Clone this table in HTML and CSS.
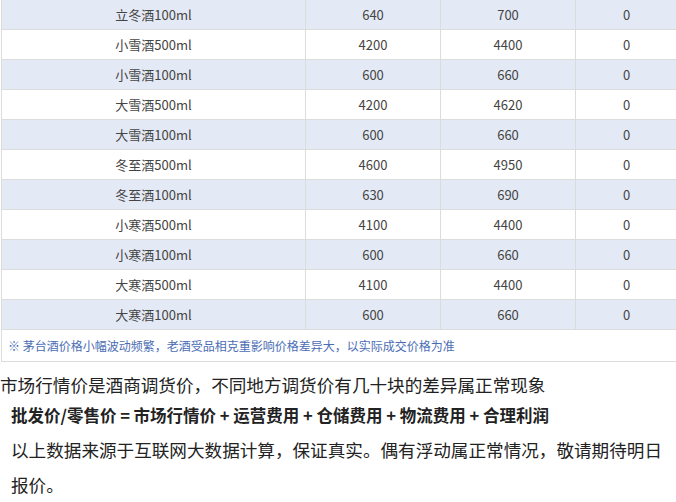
FILE: index.html
```html
<!DOCTYPE html>
<html lang="zh-CN">
<head>
<meta charset="utf-8">
<link rel="stylesheet" href="styles.css">
</head>
<body>
<div class="page">
  <table class="prices">
    <colgroup>
      <col class="c1"><col class="c2"><col class="c3"><col class="c4">
    </colgroup>
    <tbody>
      <tr class="alt"><td>立冬酒100ml</td><td>640</td><td>700</td><td>0</td></tr>
      <tr><td>小雪酒500ml</td><td>4200</td><td>4400</td><td>0</td></tr>
      <tr class="alt"><td>小雪酒100ml</td><td>600</td><td>660</td><td>0</td></tr>
      <tr><td>大雪酒500ml</td><td>4200</td><td>4620</td><td>0</td></tr>
      <tr class="alt"><td>大雪酒100ml</td><td>600</td><td>660</td><td>0</td></tr>
      <tr><td>冬至酒500ml</td><td>4600</td><td>4950</td><td>0</td></tr>
      <tr class="alt"><td>冬至酒100ml</td><td>630</td><td>690</td><td>0</td></tr>
      <tr><td>小寒酒500ml</td><td>4100</td><td>4400</td><td>0</td></tr>
      <tr class="alt"><td>小寒酒100ml</td><td>600</td><td>660</td><td>0</td></tr>
      <tr><td>大寒酒500ml</td><td>4100</td><td>4400</td><td>0</td></tr>
      <tr class="alt"><td>大寒酒100ml</td><td>600</td><td>660</td><td>0</td></tr>
      <tr class="note"><td colspan="4">※ 茅台酒价格小幅波动频繁，老酒受品相克重影响价格差异大，以实际成交价格为准</td></tr>
    </tbody>
  </table>
  <p class="lead">市场行情价是酒商调货价，不同地方调货价有几十块的差异属正常现象</p>
  <p class="formula">批发价/零售价 = 市场行情价 + 运营费用 + 仓储费用 + 物流费用 + 合理利润</p>
  <p class="source">以上数据来源于互联网大数据计算，保证真实。偶有浮动属正常情况，敬请期待明日报价。</p>
</div>
</body>
</html>
```
FILE: styles.css
```css
html, body {
  margin: 0;
  padding: 0;
  background: #fff;
}
body {
  font-family: "Noto Sans CJK SC", "Liberation Sans", sans-serif;
  overflow: hidden;
  width: 676px;
  height: 502px;
}
.page {
  width: 676px;
  overflow: hidden;
}
.prices {
  border-collapse: collapse;
  table-layout: fixed;
  width: 676px;
  margin-left: 1px;
  font-size: 13px;
  color: #444;
}
.c1 { width: 304px; }
.c2 { width: 135px; }
.c3 { width: 135px; }
.c4 { width: 102px; }
.prices td {
  height: 29px;
  padding: 0;
  text-align: center;
  vertical-align: middle;
  border: 1px solid #dcdcdc;
  line-height: 16px;
}
.prices tr:first-child td {
  border-top: none;
}
.prices tr.alt td {
  background: #e4eaf5;
}
.prices tr.note td {
  height: 31px;
  text-align: left;
  padding-left: 6px;
  font-size: 12px;
  color: #4a6db5;
  background: #fff;
}
.lead {
  margin: 10px 0 0;
  font-size: 17.6px;
  line-height: 26px;
  color: #222;
}
.formula {
  margin: 4px 0 0 11px;
  font-size: 16.5px;
  line-height: 26px;
  font-weight: bold;
  color: #222;
}
.source {
  margin: 4px 0 0 11px;
  font-size: 17.6px;
  line-height: 35px;
  color: #222;
}
```
